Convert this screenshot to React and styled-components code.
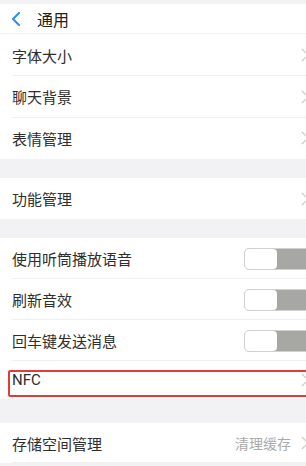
import React from "react";
import styled, { createGlobalStyle } from "styled-components";

const Global = createGlobalStyle`
  html, body { margin: 0; padding: 0; overflow: hidden; background: #f2f2f5; }
  body { font-family: "Noto Sans CJK SC", "Noto Sans", sans-serif; }
`;

const Page = styled.div`
  width: 306px;
  height: 466px;
  overflow: hidden;
  background: #f2f2f5;
  padding-top: 4px;
  box-sizing: border-box;
`;

const Header = styled.div`
  height: 30px;
  background: #fff;
  display: flex;
  align-items: center;
  border-bottom: 1px solid #f3f3f3;
  box-sizing: border-box;
`;

const Back = styled.div`
  width: 37px;
  display: flex;
  align-items: center;
  padding-left: 11px;
  box-sizing: border-box;
`;

const Title = styled.div`
  font-size: 16px;
  color: #222;
  line-height: 1;
`;

const Group = styled.div`
  background: #fff;
`;

const Gap = styled.div`
  height: ${(p) => p.h}px;
`;

const Row = styled.div`
  position: relative;
  height: ${(p) => p.h || 41}px;
  display: flex;
  align-items: center;
  justify-content: space-between;
  padding-left: 12px;
  box-sizing: border-box;
  &::after {
    content: "";
    display: ${(p) => (p.last ? "none" : "block")};
    position: absolute;
    left: 12px;
    right: 0;
    bottom: 0;
    height: 1px;
    background: #f0f0f0;
  }
`;

const Label = styled.div`
  font-size: 15px;
  color: #2e2e2e;
  line-height: 1;
  font-family: ${(p) => (p.latin ? "Roboto, 'Noto Sans', sans-serif" : "inherit")};
`;

const Right = styled.div`
  display: flex;
  align-items: center;
  gap: 10px;
  margin-right: -3px;
`;

const Hint = styled.div`
  font-size: 14px;
  color: #aaa;
  line-height: 1;
`;

const Toggle = styled.div`
  width: 70px;
  height: 22px;
  border-radius: 5px;
  background: #a7a7a4;
  border: 1px solid #d0d0d0;
  box-sizing: border-box;
  margin-right: -8px;
  display: flex;
`;

const Knob = styled.div`
  width: 32px;
  height: 100%;
  background: #fff;
  border-radius: 4px;
`;

const Highlight = styled.div`
  position: absolute;
  left: 8px;
  right: -10px;
  top: 9px;
  height: 27px;
  border: 2px solid #e53a3a;
  box-sizing: border-box;
  border-radius: 2px;
  pointer-events: none;
`;

const Chevron = () => (
  <svg width="8" height="14" viewBox="0 0 8 14">
    <path d="M1 1 L7 7 L1 13" fill="none" stroke="#c9c9c9" strokeWidth="1.2" />
  </svg>
);

const BackIcon = () => (
  <svg width="10" height="14" viewBox="0 0 10 14">
    <path d="M8 1 L2 7 L8 13" fill="none" stroke="#2b8ef2" strokeWidth="2" strokeLinecap="round" strokeLinejoin="round" />
  </svg>
);

const NavRow = ({ label, h, last, hint }) => (
  <Row h={h} last={last}>
    <Label>{label}</Label>
    <Right>
      {hint && <Hint>{hint}</Hint>}
      <Chevron />
    </Right>
  </Row>
);

const SwitchRow = ({ label, last }) => (
  <Row h={41} last={last}>
    <Label>{label}</Label>
    <Toggle>
      <Knob />
    </Toggle>
  </Row>
);

export default function App() {
  return (
    <>
      <Global />
      <Page>
        <Header>
          <Back>
            <BackIcon />
          </Back>
          <Title>通用</Title>
        </Header>
        <Group>
          <NavRow label="字体大小" h={42} />
          <NavRow label="聊天背景" h={41.5} />
          <NavRow label="表情管理" h={41.5} last />
        </Group>
        <Gap h={19} />
        <Group>
          <NavRow label="功能管理" h={41} last />
        </Group>
        <Gap h={19} />
        <Group>
          <SwitchRow label="使用听筒播放语音" />
          <SwitchRow label="刷新音效" />
          <SwitchRow label="回车键发送消息" />
          <Row h={38} last>
            <Label latin>NFC</Label>
            <Right>
              <Chevron />
            </Right>
            <Highlight />
          </Row>
        </Group>
        <Gap h={24} />
        <Group>
          <NavRow label="存储空间管理" hint="清理缓存" h={40} />
        </Group>
      </Page>
    </>
  );
}
